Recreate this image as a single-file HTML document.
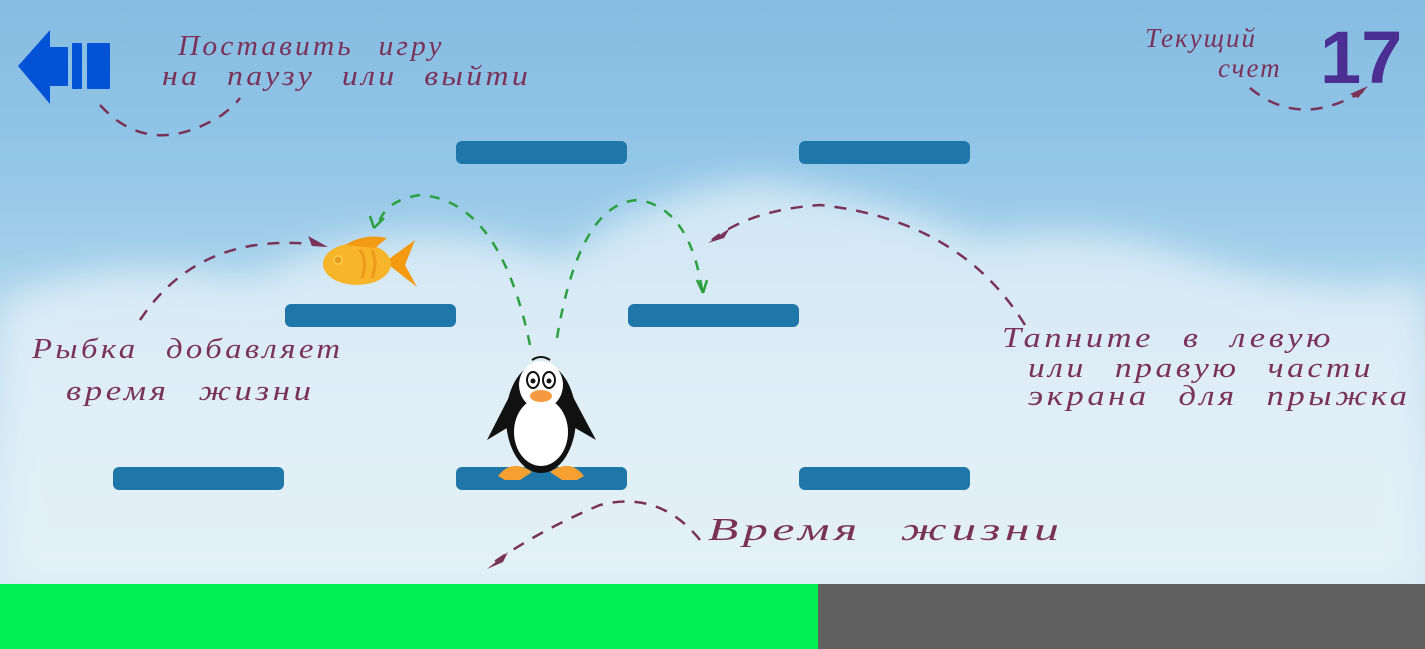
<!DOCTYPE html>
<html><head><meta charset="utf-8"><style>
html,body{margin:0;padding:0}
body{width:1425px;height:649px;position:relative;overflow:hidden;font-family:"Liberation Sans",sans-serif;
background:linear-gradient(180deg,#86bce2 0%,#93c6e7 25%,#a3cfea 40%,#c0ddef 55%,#cfe5f2 75%,#d4e8f3 90%);}
.t{position:absolute;color:#7a3358;font-family:"Liberation Serif",serif;font-style:italic;font-size:29px;line-height:27px;letter-spacing:3px;white-space:nowrap;word-spacing:14px;transform-origin:0 50%}
</style></head><body>
<svg width="1425" height="649" style="position:absolute;left:0;top:0">
<defs><filter id="b"><feGaussianBlur stdDeviation="18"/></filter></defs>
<g filter="url(#b)" fill="#eaf4fa" opacity="0.7">
<path d="M0 300 Q120 250 250 280 Q400 200 560 260 Q650 190 760 180 Q900 200 980 240 Q1100 220 1200 260 Q1330 300 1425 280 L1425 590 L0 590Z"/>
</g>
<g fill="#1f76a8">
<rect x="456" y="141" width="171" height="23" rx="6"/>
<rect x="799" y="141" width="171" height="23" rx="6"/>
<rect x="285" y="304" width="171" height="23" rx="6"/>
<rect x="628" y="304" width="171" height="23" rx="6"/>
<rect x="113" y="467" width="171" height="23" rx="6"/>
<rect x="456" y="467" width="171" height="23" rx="6"/>
<rect x="799" y="467" width="171" height="23" rx="6"/>
</g>
<g fill="none" stroke="#7a3358" stroke-width="2.5" stroke-dasharray="12 10">
<path d="M100 105 Q150 160 222 115 Q235 105 240 98"/>
<path d="M1250 88 Q1300 130 1365 90"/>
<path d="M140 320 Q200 230 320 245"/>
<path d="M1025 325 Q960 220 820 205 Q750 210 712 240"/>
<path d="M700 540 Q660 490 600 505 Q540 530 490 565"/>
</g>
<g fill="#7a3358">
<path d="M1368 86 L1350 94 L1358 98Z"/>
<path d="M328 247 L308 236 L312 246Z"/>
<path d="M708 243 L730 228 L724 238Z"/>
<path d="M487 569 L508 552 L503 562Z"/>
</g>
<g fill="none" stroke="#2ca040" stroke-width="2.5" stroke-dasharray="10 10">
<path d="M530 345 Q500 200 420 195 Q385 200 378 225"/>
<path d="M557 338 Q580 200 640 200 Q690 210 702 290"/>
</g>
<path d="M374 228 L370 216 M374 228 L384 218 M703 293 L697 280 M703 293 L707 280" stroke="#2ca040" stroke-width="2.5" fill="none"/>
<path d="M18 66 L50 30 L50 47 L68 47 L68 86 L50 86 L50 104Z" fill="#0452d5"/>
<rect x="72" y="43" width="10" height="46" rx="1" fill="#0452d5"/>
<rect x="87" y="43" width="23" height="46" rx="1" fill="#0452d5"/>
<g>
<path d="M385 262 L415 240 L405 265 L417 287 Z" fill="#f39a10"/>
<ellipse cx="357" cy="264" rx="34" ry="21" fill="#f7b52a"/>
<path d="M345 245 Q365 233 387 238 L375 248 Z" fill="#f29a12"/>
<path d="M360 250 Q368 262 362 278 M372 250 Q378 262 372 278" stroke="#ee9a1a" stroke-width="3" fill="none"/>
<circle cx="338" cy="260" r="4" fill="#e59a20" stroke="#ffe060"/>
</g>
<g>
<path d="M510 395 L487 440 L512 425Z" fill="#111"/>
<path d="M572 395 L596 440 L570 425Z" fill="#111"/>
<ellipse cx="541" cy="418" rx="35" ry="55" fill="#111"/>
<ellipse cx="541" cy="385" rx="22" ry="24" fill="#fff"/>
<ellipse cx="541" cy="432" rx="27" ry="34" fill="#fff"/>
<path d="M532 360 Q541 354 550 360" stroke="#111" stroke-width="2" fill="none"/>
<ellipse cx="533" cy="380" rx="6" ry="8" fill="#fff" stroke="#111" stroke-width="2"/>
<ellipse cx="549" cy="380" rx="6" ry="8" fill="#fff" stroke="#111" stroke-width="2"/>
<circle cx="533" cy="381" r="2.5" fill="#111"/><circle cx="549" cy="381" r="2.5" fill="#111"/>
<ellipse cx="541" cy="396" rx="11" ry="6" fill="#f59a40"/>
<path d="M498 476 Q512 458 532 472 L520 480 L505 480Z" fill="#f5a030"/>
<path d="M584 476 Q570 458 550 472 L562 480 L577 480Z" fill="#f5a030"/>
</g>
</svg>
<div class="t" style="left:178px;top:33px;transform:scaleX(1.02)">Поставить игру</div>
<div class="t" style="left:162px;top:63px;transform:scaleX(1.1)">на паузу или выйти</div>
<div class="t" style="left:1145px;top:25px;font-size:27px;letter-spacing:2px">Текущий</div>
<div class="t" style="left:1218px;top:55px;font-size:27px;letter-spacing:2px">счет</div>
<div style="position:absolute;left:1320px;top:18px;font-size:74px;font-weight:bold;color:#4b2e92;line-height:80px">17</div>
<div class="t" style="left:32px;top:336px;transform:scaleX(1.13)">Рыбка добавляет</div>
<div class="t" style="left:66px;top:378px;transform:scaleX(1.2)">время жизни</div>
<div class="t" style="left:1002px;top:325px;transform:scaleX(1.19)">Тапните в левую</div>
<div class="t" style="left:1028px;top:355px;transform:scaleX(1.16)">или правую части</div>
<div class="t" style="left:1028px;top:383px;transform:scaleX(1.19)">экрана для прыжка</div>
<div class="t" style="left:708px;top:516px;font-size:32px;transform:scaleX(1.55)">Время жизни</div>
<div style="position:absolute;left:0;top:584px;width:818px;height:65px;background:#01f152"></div>
<div style="position:absolute;left:818px;top:584px;width:607px;height:65px;background:#5f605f"></div>
</body></html>
